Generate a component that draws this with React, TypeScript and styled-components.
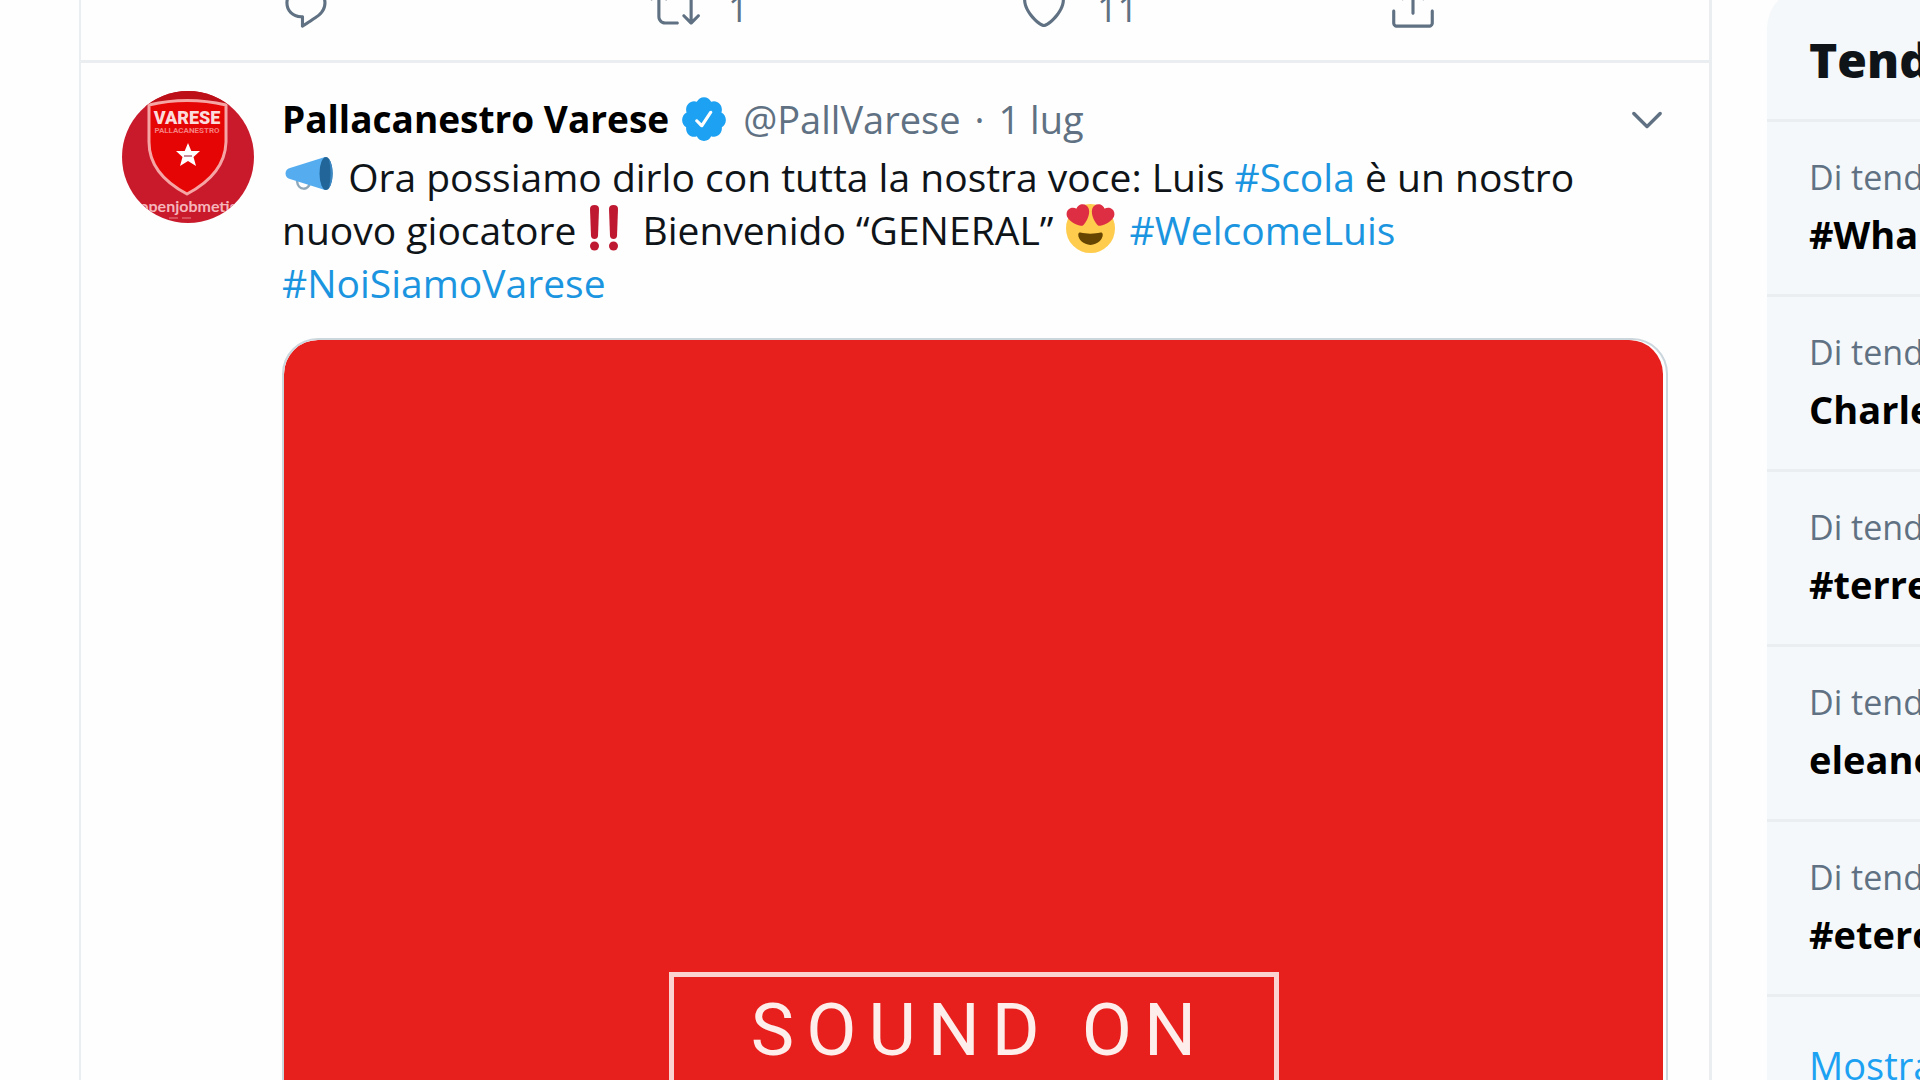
import React from "react";
import styled, { createGlobalStyle } from "styled-components";

const ink = "#0f1419";
const muted = "#5f7182";
const blue = "#1b95e0";
const line = "#ebeef0";

const GlobalStyle = createGlobalStyle`
  *, *::before, *::after { box-sizing: border-box; }
  body {
    margin: 0;
    background: #fefefe;
    color: ${ink};
    font-family: "Open Sans", "Noto Sans", sans-serif;
    overflow: hidden;
  }
  a { color: inherit; text-decoration: none; }
  button { border: 0; padding: 0; background: none; font: inherit; color: inherit; cursor: pointer; }
`;

const Page = styled.div`
  display: flex;
  height: 100vh;
  overflow: hidden;
  padding-left: 79px;
`;

const Timeline = styled.main`
  flex: 1;
  min-width: 0;
  border-left: 2px solid ${line};
  border-right: 3px solid ${line};
`;

const PreviousTweet = styled.section`
  display: flex;
  align-items: flex-end;
  height: 63px;
  overflow: hidden;
  padding: 0 41px 28px 200px;
  border-bottom: 3px solid ${line};
`;

const Actions = styled.div`
  flex: 1;
  display: grid;
  grid-template-columns: repeat(3, 1fr) auto;
  max-width: 1157px;
`;

const Action = styled.button`
  display: flex;
  align-items: flex-start;
  gap: 28px;
  height: 50px;
  color: ${muted};
  font-size: 36px;
  line-height: 54px;
`;

const Icon = styled.svg<{ $size?: number }>`
  display: block;
  flex: none;
  width: ${(p) => p.$size ?? 50}px;
  height: ${(p) => p.$size ?? 50}px;
  fill: currentColor;
`;

const Tweet = styled.article`
  display: flex;
  gap: 28px;
  padding: 28px 41px 0;
`;

const AvatarLink = styled.a`
  flex: none;
  width: 132px;
  height: 132px;
`;

const Avatar = styled.svg`
  display: block;
  width: 100%;
  height: 100%;
`;

const Content = styled.div`
  flex: 1;
  min-width: 0;
`;

const Header = styled.header`
  display: flex;
  align-items: center;
  height: 55px;
  font-size: 38px;
  line-height: 54px;
  white-space: nowrap;
`;

const Author = styled.a`
  display: flex;
  align-items: center;
  gap: 10px;
  font-size: 37px;
  font-weight: 700;
  color: #000;
`;

const Badge = styled.span`
  display: block;
  color: #1da1f2;
`;

const Meta = styled.div`
  display: flex;
  gap: 14px;
  margin-left: 14px;
  color: ${muted};
`;

const More = styled.button`
  margin-left: auto;
  color: ${muted};
`;

const Body = styled.p`
  margin: 4px 0 0;
  font-size: 39px;
  line-height: 53px;
`;

const Tag = styled.a`
  color: ${blue};
`;

const Emoji = styled.svg`
  width: 49px;
  height: 49px;
  margin: 0 4px 0 3px;
  vertical-align: -8px;
`;

const Media = styled.div`
  margin-top: 29px;
  padding-right: 3px;
  border: 2px solid #ccd6dd;
  border-radius: 36px;
  overflow: hidden;
`;

const Poster = styled.div`
  display: flex;
  justify-content: center;
  align-items: flex-start;
  height: 860px;
  padding-top: 632px;
  border-radius: 34px;
  background: #e7201d;
`;

const SoundLabel = styled.div`
  width: 610px;
  max-width: 100%;
  height: 200px;
  padding: 10px 0 0 12px;
  border: 5px solid #fbd3d0;
  color: #fdeeeb;
  font: 400 73px/86px Roboto, sans-serif;
  letter-spacing: 12px;
  text-align: center;
`;

const Sidebar = styled.aside`
  flex: none;
  width: 208px;
  padding-left: 55px;
  overflow: hidden;
`;

const Trends = styled.section`
  min-height: 110vh;
  margin-top: -12px;
  border-radius: 40px 0 0 0;
  background: #f5f8fa;
  white-space: nowrap;
  overflow: hidden;
`;

const TrendsTitle = styled.h2`
  display: flex;
  align-items: center;
  height: 134px;
  margin: 0;
  padding: 12px 0 0 42px;
  border-bottom: 3px solid ${line};
  font-size: 48px;
  line-height: 60px;
  font-weight: 800;
`;

const Trend = styled.a`
  display: flex;
  flex-direction: column;
  height: 175px;
  padding: 28px 0 0 42px;
  border-bottom: 3px solid ${line};
`;

const TrendContext = styled.span`
  font-size: 34px;
  line-height: 54px;
  color: ${muted};
`;

const TrendName = styled.span`
  font-size: 38px;
  line-height: 60px;
  font-weight: 700;
  color: #000;
`;

const ShowMore = styled.a`
  display: block;
  padding: 38px 0 0 42px;
  font-size: 38px;
  line-height: 60px;
  color: #1da1f2;
`;

const paths = {
  reply:
    "M14.046 2.242l-4.148-.01h-.002c-4.374 0-7.8 3.427-7.8 7.802 0 4.098 3.186 7.206 7.465 7.37v3.828c0 .108.044.286.12.403.142.225.384.347.632.347.138 0 .277-.038.402-.118.264-.168 6.473-4.14 8.088-5.506 1.902-1.61 3.04-3.97 3.043-6.312v-.017c-.006-4.367-3.43-7.787-7.8-7.788zm3.787 12.972c-1.134.96-4.862 3.405-6.772 4.643V16.67c0-.414-.335-.75-.75-.75h-.396c-3.66 0-6.318-2.476-6.318-5.886 0-3.534 2.768-6.302 6.3-6.302l4.147.01h.002c3.532 0 6.3 2.766 6.302 6.296-.003 1.91-.942 3.844-2.514 5.176z",
  retweet:
    "M23.77 15.67c-.292-.293-.767-.293-1.06 0l-2.22 2.22V7.65c0-2.068-1.683-3.75-3.75-3.75h-5.85c-.414 0-.75.336-.75.75s.336.75.75.75h5.85c1.24 0 2.25 1.01 2.25 2.25v10.24l-2.22-2.22c-.293-.293-.768-.293-1.06 0s-.294.768 0 1.06l3.5 3.5c.145.147.337.22.53.22s.383-.072.53-.22l3.5-3.5c.294-.292.294-.767 0-1.06zm-10.66 3.28H7.26c-1.24 0-2.25-1.01-2.25-2.25V6.46l2.22 2.22c.148.147.34.22.532.22s.384-.073.53-.22c.293-.293.293-.768 0-1.06l-3.5-3.5c-.293-.294-.768-.294-1.06 0l-3.5 3.5c-.294.292-.294.767 0 1.06s.767.293 1.06 0l2.22-2.22V16.7c0 2.068 1.683 3.75 3.75 3.75h5.85c.414 0 .75-.336.75-.75s-.337-.75-.75-.75z",
  like: "M12 21.638h-.014C9.403 21.59 1.95 14.856 1.95 8.478c0-3.064 2.525-5.754 5.403-5.754 2.29 0 3.83 1.58 4.646 2.73.814-1.148 2.354-2.73 4.645-2.73 2.88 0 5.404 2.69 5.404 5.755 0 6.376-7.454 13.11-10.037 13.157H12zM7.354 4.225c-2.08 0-3.903 1.988-3.903 4.255 0 5.74 7.034 11.596 8.55 11.658 1.518-.062 8.55-5.917 8.55-11.658 0-2.267-1.823-4.255-3.903-4.255-2.528 0-3.94 2.936-3.952 2.965-.23.562-1.156.562-1.387 0-.014-.03-1.425-2.965-3.954-2.965z",
  share:
    "M17.53 7.47l-5-5c-.293-.293-.768-.293-1.06 0l-5 5c-.294.293-.294.768 0 1.06s.767.294 1.06 0l3.72-3.72V15c0 .414.336.75.75.75s.75-.336.75-.75V4.81l3.72 3.72c.146.147.338.22.53.22s.384-.072.53-.22c.293-.293.293-.767 0-1.06zM19.708 21.944H4.292C3.028 21.944 2 20.916 2 19.652V14c0-.414.336-.75.75-.75s.75.336.75.75v5.652c0 .437.355.792.792.792h15.416c.437 0 .792-.355.792-.792V14c0-.414.336-.75.75-.75s.75.336.75.75v5.652c0 1.264-1.028 2.292-2.292 2.292z",
  verified:
    "M22.5 12.5c0-1.58-.875-2.95-2.148-3.6.154-.435.238-.905.238-1.4 0-2.21-1.71-3.998-3.818-3.998-.47 0-.92.084-1.336.25C14.818 2.415 13.51 1.5 12 1.5s-2.816.917-3.437 2.25c-.415-.165-.866-.25-1.336-.25-2.11 0-3.818 1.79-3.818 4 0 .494.083.964.237 1.4-1.272.65-2.147 2.018-2.147 3.6 0 1.495.782 2.798 1.942 3.486-.02.17-.032.34-.032.514 0 2.21 1.708 4 3.818 4 .47 0 .92-.086 1.335-.25.62 1.334 1.926 2.25 3.437 2.25 1.512 0 2.818-.916 3.437-2.25.415.163.865.248 1.336.248 2.11 0 3.818-1.79 3.818-4 0-.174-.012-.344-.033-.513 1.158-.687 1.943-1.99 1.943-3.484zm-6.616-3.334l-4.334 6.5c-.145.217-.382.334-.625.334-.143 0-.288-.04-.416-.126l-.115-.094-2.415-2.415c-.293-.293-.293-.768 0-1.06s.768-.294 1.06 0l1.77 1.767 3.825-5.74c.23-.345.696-.436 1.04-.207.346.23.44.696.21 1.04z",
  chevron:
    "M20.207 8.147c-.39-.39-1.023-.39-1.414 0L12 14.94 5.207 8.147c-.39-.39-1.023-.39-1.414 0-.39.39-.39 1.023 0 1.414l7.5 7.5c.195.196.45.294.707.294s.512-.098.707-.293l7.5-7.5c.39-.39.39-1.022 0-1.413z",
};

function Glyph({ name, size }: { name: keyof typeof paths; size?: number }) {
  return (
    <Icon viewBox="0 0 24 24" $size={size} aria-hidden="true">
      <path d={paths[name]} />
    </Icon>
  );
}

const trends = ["#Wha", "Charle", "#terre", "eleano", "#etero"];

function TeamCrest() {
  return (
    <Avatar viewBox="0 0 132 132" role="img" aria-label="Pallacanestro Varese">
      <defs>
        <clipPath id="round">
          <circle cx="66" cy="66" r="66" />
        </clipPath>
      </defs>
      <g clipPath="url(#round)">
        <rect width="132" height="134" fill="#c91a2c" />
        <path d="M0 0H132V26Q104 8 66 8T0 28Z" fill="#bd0f17" />
        <path
          d="M27 14Q65 5 104 14V51Q103 83 65 103Q27 83 27 51Z"
          fill="#e60505"
          stroke="#f6a5a5"
          strokeWidth="3"
          strokeLinejoin="round"
        />
        <text
          x="65"
          y="33"
          textAnchor="middle"
          fontFamily="Roboto, sans-serif"
          fontWeight="900"
          fontSize="18"
          fill="#fbdcdc"
        >
          VARESE
        </text>
        <text x="65" y="42" textAnchor="middle" fontFamily="Roboto, sans-serif" fontWeight="700" fontSize="8" fill="#f58080">
          PALLACANESTRO
        </text>
        <path d="M66 52l3.300 8h8.700l-6.500 6 2.500 9-8-5-8 5 2.500-9-6.500-6h8.700z" fill="#fff" />
        <path d="M62 65h8" stroke="#c98a9a" strokeWidth="2" />
        <text x="66" y="121" textAnchor="middle" fontFamily="Lato, sans-serif" fontWeight="700" fontSize="16" fill="#f5b5bb">
          openjobmetis
        </text>
        <path d="M47 127h9M60 127h9" stroke="#e0606c" strokeWidth="1.500" />
      </g>
    </Avatar>
  );
}

function Megaphone() {
  return (
    <Emoji viewBox="0 0 49 49" role="img" aria-label="Megafono">
      <path d="M12 30c1 10 12 10 13 1" fill="none" stroke="#8fa9bb" strokeWidth="2.500" />
      <path d="M5 17L40 6c9 3 9 29 0 33L5 28c-6-1-6-10 0-11z" fill="#55acee" />
      <ellipse cx="41" cy="22.500" rx="6.500" ry="16.500" fill="#226699" />
      <path d="M44 8c5 6 5 23 0 29 2-9 2-20 0-29z" fill="#3b88c3" />
    </Emoji>
  );
}

function DoubleBang() {
  return (
    <Emoji viewBox="0 0 49 49" role="img" aria-label="Doppio punto esclamativo">
      <g fill="#be1931">
        <path d="M11 5q0-4 4.500-4t4.500 4l-1 27q-.5 3-3.500 3t-3.500-3z" />
        <circle cx="15.500" cy="42" r="4.500" />
        <path d="M30 5q0-4 4.500-4t4.500 4l-1 27q-.5 3-3.500 3t-3.500-3z" />
        <circle cx="34.500" cy="42" r="4.500" />
      </g>
    </Emoji>
  );
}

function HeartEyes() {
  return (
    <Emoji viewBox="0 0 36 36" role="img" aria-label="Faccina con occhi a cuore">
      <circle cx="18" cy="18" r="18" fill="#ffcc4d" />
      <g fill="#dd2e44">
        <path d="M16.650 3.281C15.791.85 13.126-.426 10.694.431c-1.476.52-2.521 1.711-2.928 3.104-1.191-.829-2.751-1.100-4.225-.58C1.111 3.813-.167 6.480.692 8.911c.122.344.284.663.472.958 1.951 3.582 7.588 6.100 11.001 6.131 2.637-2.167 5.446-7.665 4.718-11.677-.038-.348-.113-.698-.233-1.042z" />
        <path d="M19.350 3.281C20.209.85 22.875-.426 25.306.431c1.476.52 2.521 1.711 2.929 3.104 1.191-.829 2.751-1.100 4.225-.58 2.430.858 3.707 3.525 2.850 5.956-.123.344-.284.663-.473.958-1.951 3.582-7.588 6.100-11.002 6.131-2.637-2.167-5.445-7.665-4.717-11.677.037-.348.112-.698.232-1.042z" />
      </g>
      <path
        d="M18 21.849c-2.966 0-4.935-.346-7.369-.819-.557-.106-1.638 0-1.638 1.638 0 3.275 3.763 7.369 9.007 7.369s9.007-4.094 9.007-7.369c0-1.638-1.082-1.745-1.638-1.638-2.434.473-4.402.819-7.369.819"
        fill="#664500"
      />
    </Emoji>
  );
}

export default function App() {
  return (
    <>
      <GlobalStyle />
      <Page>
        <Timeline>
          <PreviousTweet>
            <Actions>
              <Action aria-label="Rispondi">
                <Glyph name="reply" />
              </Action>
              <Action>
                <Glyph name="retweet" />
                <span>1</span>
              </Action>
              <Action>
                <Glyph name="like" />
                <span>11</span>
              </Action>
              <Action aria-label="Condividi">
                <Glyph name="share" />
              </Action>
            </Actions>
          </PreviousTweet>

          <Tweet>
            <AvatarLink href="#profile">
              <TeamCrest />
            </AvatarLink>
            <Content>
              <Header>
                <Author href="#profile">
                  Pallacanestro Varese
                  <Badge>
                    <Glyph name="verified" />
                  </Badge>
                </Author>
                <Meta>
                  <span>@PallVarese</span>
                  <span>·</span>
                  <a href="#status">1 lug</a>
                </Meta>
                <More aria-label="Altro">
                  <Glyph name="chevron" size={42} />
                </More>
              </Header>
              <Body>
                <Megaphone /> Ora possiamo dirlo con tutta la nostra voce: Luis <Tag href="#scola">#Scola</Tag> è un
                nostro nuovo giocatore
                <DoubleBang /> Bienvenido “GENERAL” <HeartEyes /> <Tag href="#welcome">#WelcomeLuis</Tag>{" "}
                <Tag href="#noisiamo">#NoiSiamoVarese</Tag>
              </Body>
              <Media>
                <Poster>
                  <SoundLabel>SOUND ON</SoundLabel>
                </Poster>
              </Media>
            </Content>
          </Tweet>
        </Timeline>

        <Sidebar>
          <Trends>
            <TrendsTitle>Tend</TrendsTitle>
            {trends.map((name) => (
              <Trend href="#trend" key={name}>
                <TrendContext>Di tend</TrendContext>
                <TrendName>{name}</TrendName>
              </Trend>
            ))}
            <ShowMore href="#more">Mostra</ShowMore>
          </Trends>
        </Sidebar>
      </Page>
    </>
  );
}
